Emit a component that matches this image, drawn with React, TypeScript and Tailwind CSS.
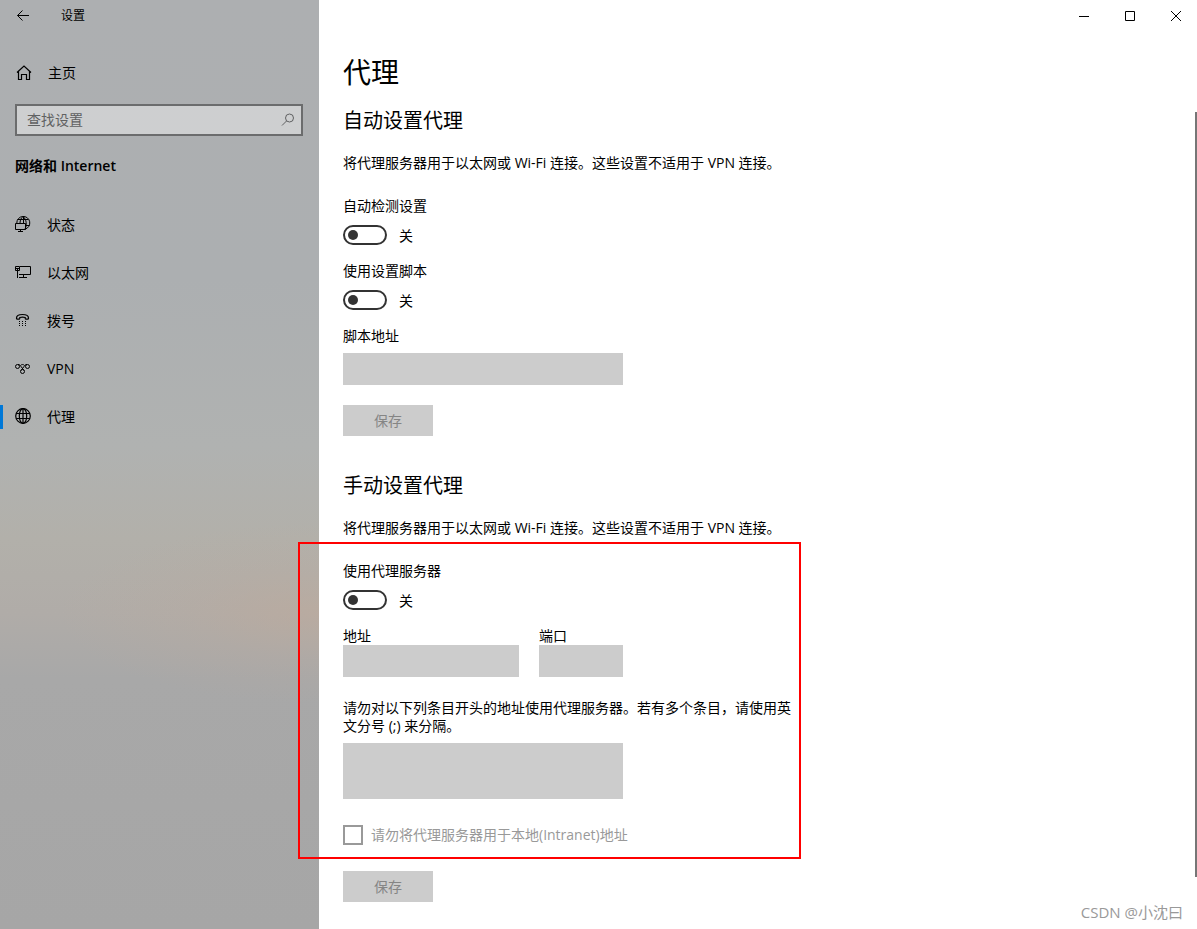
import { useState, type ReactNode } from 'react';
import clsx from 'clsx';

function Icon({ children, size = 16 }: { children: ReactNode; size?: number }) {
  return (
    <svg
      width={size}
      height={size}
      viewBox={`0 0 ${size} ${size}`}
      fill="none"
      stroke="currentColor"
      className="shrink-0"
      aria-hidden="true"
    >
      {children}
    </svg>
  );
}

const StatusIcon = () => (
  <Icon>
    <path d="M1.800 7A6.500 6.500 0 1 1 10 13.200M2.500 3.500h11M10.500 9.500h4M8 .5C6 2 5.200 4 5 7M8 .5c3.800 3 4 9 2 12.500M8.500 .5V7" />
    <path d="M.5 7.500h10v6H.5zM5.500 13.500v2M3 15.500h5" />
  </Icon>
);

const EthernetIcon = () => (
  <Icon>
    <path d="M5 2.500h10.500v8H4M2.500 7v7M8.500 10.500v3M4 13.500h8" />
    <path d="M.5 2.500h4v4h-4zM1 4.500h3M2.500 4.500V6" />
  </Icon>
);

const DialupIcon = () => (
  <Icon>
    <path
      strokeWidth="1.2"
      d="M1.500 6C1.500 3.500 4 2.500 7.500 2.500s6 1 6 3.500c0 .8-.3 1.200-1 1.200h-1.300c-.7 0-1-.4-1-1V5.500c-1.700-.5-3.700-.5-5.400 0v.7c0 .6-.3 1-1 1H2.500c-.7 0-1-.4-1-1.200z"
    />
    <path d="M4 9.500h1M7 9.500h1M10 9.500h1M4 11.500h1M7 11.500h1M10 11.500h1M4 13.500h1M7 13.500h1M10 13.500h1" />
  </Icon>
);

const VpnIcon = () => (
  <Icon>
    <circle cx="2.500" cy="6.500" r="2" />
    <circle cx="12.500" cy="6.500" r="2" />
    <circle cx="7.500" cy="11.500" r="2" />
    <path d="M3 4.500c1.500 0 2 .5 3 2l3 4M12 4.500c-1.500 0-2 .5-3 2l-3 4M5.500 5.500c1-1.300 3-1.300 4 0" />
  </Icon>
);

const GlobeIcon = () => (
  <Icon>
    <g strokeWidth="1.2">
      <circle cx="8" cy="8" r="7.300" />
      <ellipse cx="8" cy="8" rx="3.700" ry="7.300" />
      <path d="M8 .5v15M1.200 5.500h13.600M1.200 10.500h13.600" />
    </g>
  </Icon>
);

const navItems = [
  { label: '状态', icon: <StatusIcon /> },
  { label: '以太网', icon: <EthernetIcon /> },
  { label: '拨号', icon: <DialupIcon /> },
  { label: 'VPN', icon: <VpnIcon /> },
  { label: '代理', icon: <GlobeIcon />, active: true },
];

function Sidebar() {
  return (
    <aside className="w-[319px] shrink-0 bg-[radial-gradient(ellipse_260px_90px_at_100%_66%,rgba(192,170,154,0.55),rgba(192,170,154,0.2)_50%,transparent),linear-gradient(to_bottom,#adafb1_0%,#acafb1_30%,#b0b2b1_48%,#b2b0aa_58%,#b0aca8_66%,#a8a8a8_73%,#a6a6a6_100%)]">
      <div className="flex h-8 items-center">
        <button type="button" aria-label="返回" className="flex h-8 w-[46px] items-center justify-center">
          <Icon size={14}>
            <path d="M1.500 6.500H13M6.500 1.500l-5 5 5 5" />
          </Icon>
        </button>
        <span className="ml-[15px] text-xs">设置</span>
      </div>

      <a href="#home" className="mt-[17px] flex h-12 items-center gap-4 px-4">
        <Icon>
          <path strokeWidth="1.2" d="M1 7.500L8 1l7 6.500M2.500 6.500v8h3v-5h5v5h3v-8" />
        </Icon>
        主页
      </a>

      <label className="mr-4 ml-[15px] mt-[7px] flex h-8 items-center border-2 border-[#6b6c6d] bg-white/40 pr-1.5 pl-2.5">
        <input
          type="search"
          aria-label="查找设置"
          placeholder="查找设置"
          className="min-w-0 flex-1 bg-transparent outline-none placeholder:text-[#606162]"
        />
        <span className="text-[#606162]">
          <Icon>
            <circle cx="10.500" cy="6" r="4" />
            <path d="M7.500 9L3 13.500" />
          </Icon>
        </span>
      </label>

      <h2 className="mt-[21px] px-[15px] font-semibold">网络和 Internet</h2>

      <nav className="mt-[26px]">
        {navItems.map((item) => (
          <a key={item.label} href={`#${item.label}`} className="flex h-12 items-center">
            <span className={clsx('h-6 w-[3px]', item.active && 'bg-[#0078d7]')} />
            <span className="ml-3 flex items-start gap-4">
              {item.icon}
              {item.label}
            </span>
          </a>
        ))}
      </nav>
    </aside>
  );
}

function WindowControls() {
  return (
    <div className="flex h-8 justify-end gap-1">
      <button type="button" aria-label="最小化" className="flex w-[42px] items-center justify-center">
        <Icon size={10}>
          <path d="M0 5.500h10" />
        </Icon>
      </button>
      <button type="button" aria-label="最大化" className="flex w-[42px] items-center justify-center">
        <Icon size={10}>
          <path d="M.5.5h9v9h-9z" />
        </Icon>
      </button>
      <button type="button" aria-label="关闭" className="flex w-[42px] items-center justify-center">
        <Icon size={10}>
          <path d="M0 0l10 10M10 0L0 10" />
        </Icon>
      </button>
    </div>
  );
}

interface ToggleProps {
  id: string;
  label: string;
  checked: boolean;
  onChange: (checked: boolean) => void;
}

function Toggle({ id, label, checked, onChange }: ToggleProps) {
  return (
    <div>
      <label htmlFor={id} className="block">
        {label}
      </label>
      <div className="mt-2.5 flex h-5 items-end gap-3">
        <input
          id={id}
          type="checkbox"
          role="switch"
          checked={checked}
          onChange={(e) => onChange(e.target.checked)}
          className="flex h-5 w-11 appearance-none items-center rounded-full border-2 border-[#333] px-[3px] before:size-2.5 before:rounded-full before:bg-[#333] checked:justify-end checked:border-[#0078d7] checked:bg-[#0078d7] checked:before:bg-white"
        />
        <span>{checked ? '开' : '关'}</span>
      </div>
    </div>
  );
}

function SaveButton({ disabled }: { disabled: boolean }) {
  return (
    <button
      type="button"
      disabled={disabled}
      className="block h-[31px] w-[90px] bg-[#ccc] disabled:text-[#858585]"
    >
      保存
    </button>
  );
}

const fieldClass = 'block w-full border-2 border-[#999] px-2 outline-none disabled:border-[#ccc] disabled:bg-[#ccc]';

export default function App() {
  const [autoDetect, setAutoDetect] = useState(false);
  const [useScript, setUseScript] = useState(false);
  const [useProxy, setUseProxy] = useState(false);

  return (
    <div className="flex min-h-screen bg-white font-['Open_Sans','Noto_Sans_CJK_SC',sans-serif] text-sm leading-[18px] text-black">
      <Sidebar />

      <main className="relative min-w-0 flex-1">
        <WindowControls />

        <div className="pt-5 pb-[27px] pl-6">
          <h1 className="text-[28px] leading-10">代理</h1>

          <section className="mt-[15px]">
            <h2 className="text-xl leading-7">自动设置代理</h2>
            <p className="mt-[19px]">将代理服务器用于以太网或 Wi-Fi 连接。这些设置不适用于 VPN 连接。</p>
            <div className="mt-[25px] flex flex-col gap-[17px]">
              <Toggle id="auto-detect" label="自动检测设置" checked={autoDetect} onChange={setAutoDetect} />
              <Toggle id="use-script" label="使用设置脚本" checked={useScript} onChange={setUseScript} />
              <div className="w-[280px]">
                <label htmlFor="script-address" className="block">
                  脚本地址
                </label>
                <input id="script-address" type="text" disabled={!useScript} className={clsx(fieldClass, 'mt-2 h-8')} />
              </div>
            </div>
            <div className="mt-5">
              <SaveButton disabled={!useScript} />
            </div>
          </section>

          <section className="mt-9">
            <h2 className="text-xl leading-7">手动设置代理</h2>
            <p className="mt-[19px]">将代理服务器用于以太网或 Wi-Fi 连接。这些设置不适用于 VPN 连接。</p>

            <div className="relative mt-[25px] max-w-[450px]">
              <Toggle id="use-proxy" label="使用代理服务器" checked={useProxy} onChange={setUseProxy} />

              <div className="mt-[17px] flex gap-5">
                <div className="w-44">
                  <label htmlFor="proxy-address" className="block">
                    地址
                  </label>
                  <input id="proxy-address" type="text" disabled={!useProxy} className={clsx(fieldClass, 'h-8')} />
                </div>
                <div className="w-[84px]">
                  <label htmlFor="proxy-port" className="block">
                    端口
                  </label>
                  <input id="proxy-port" type="text" disabled={!useProxy} className={clsx(fieldClass, 'h-8')} />
                </div>
              </div>

              <label htmlFor="exceptions" className="mt-[22px] block">
                请勿对以下列条目开头的地址使用代理服务器。若有多个条目，请使用英文分号 (;) 来分隔。
              </label>
              <textarea
                id="exceptions"
                disabled={!useProxy}
                className={clsx(fieldClass, 'mt-2 h-14 max-w-[280px] resize-none')}
              />

              <label className={clsx('mt-[26px] flex h-5 items-center gap-2', !useProxy && 'text-[#999]')}>
                <input
                  type="checkbox"
                  disabled={!useProxy}
                  className="size-5 appearance-none border-2 border-[#333] checked:bg-[#0078d7] disabled:border-[#999]"
                />
                请勿将代理服务器用于本地(Intranet)地址
              </label>

              {/* Highlight frame */}
              <div className="pointer-events-none absolute -top-5 -right-2 -bottom-3.5 -left-[45px] border-2 border-[#ff0000]" />
            </div>

            <div className="mt-[26px]">
              <SaveButton disabled={!useProxy} />
            </div>
          </section>
        </div>

        {/* Scrollbar thumb */}
        <div className="absolute top-28 right-0 bottom-[52px] w-0.5 bg-[#767676]" />
        <span className="absolute right-3.5 bottom-2 text-[15px] text-[#999]">CSDN @小沈曰</span>
      </main>
    </div>
  );
}
